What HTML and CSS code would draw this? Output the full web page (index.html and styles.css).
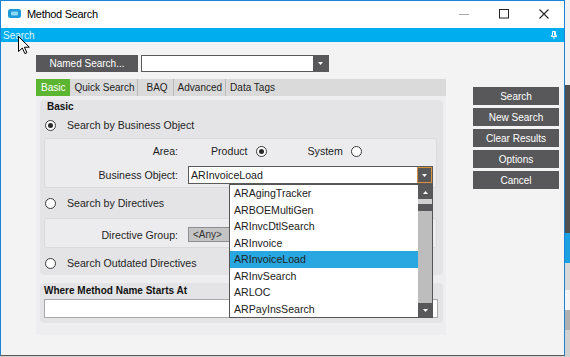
FILE: index.html
```html
<!DOCTYPE html>
<html>
<head>
<meta charset="utf-8">
<link rel="stylesheet" href="styles.css">
</head>
<body>
<div class="window">
  <div class="titlebar">
    <svg class="app-icon" width="13" height="9" viewBox="0 0 13 9"><rect x="0" y="0" width="13" height="9" rx="2.5" fill="#1c9ad9"/><rect x="3" y="2.5" width="7" height="4" rx="1" fill="#8fd6f6"/></svg>
    <span class="title">Method Search</span>
    <div class="controls">
      <div class="ctl"><svg width="10" height="10" viewBox="0 0 10 10"><line x1="0" y1="5.5" x2="10" y2="5.5" stroke="#a8a8a8"/></svg></div>
      <div class="ctl"><svg width="10" height="10" viewBox="0 0 10 10"><rect x="0.5" y="0.5" width="9" height="8.5" fill="none" stroke="#222"/></svg></div>
      <div class="ctl"><svg width="10" height="10" viewBox="0 0 10 10"><path d="M0.5 0.5 L9.5 9.5 M9.5 0.5 L0.5 9.5" stroke="#222" stroke-width="1.1"/></svg></div>
    </div>
  </div>
  <div class="panelbar">
    <span>Search</span>
    <svg width="6" height="8" viewBox="0 0 6 8"><path d="M1.5 0.5 H4.5 V4.5 H5.5 V5.5 H0.5 V4.5 H1.5 Z" fill="none" stroke="#fff"/><line x1="3" y1="5.5" x2="3" y2="8" stroke="#fff"/><line x1="3.5" y1="1" x2="3.5" y2="4.5" stroke="#fff"/></svg>
  </div>
  <div class="content">
    <div class="main">
      <div class="named-row">
        <div class="btn named">Named Search...</div>
        <div class="combo named-combo">
          <div class="txt"></div>
          <div class="drop"><svg width="5" height="3" viewBox="0 0 5 3"><path d="M0 0 H5 L2.5 3 Z" fill="#fff"/></svg></div>
        </div>
      </div>
      <div class="tabs">
        <div class="tab active">Basic</div>
        <div class="tab sep">Quick Search</div>
        <div class="tab sep baq">BAQ</div>
        <div class="tab sep">Advanced</div>
        <div class="tab">Data Tags</div>
      </div>
      <div class="tabpage">
        <div class="group basic">
          <div class="group-title">Basic</div>
          <div class="radio-row r1"><span class="radio checked"></span><span>Search by Business Object</span></div>
          <div class="subbox box1">
            <div class="field-row area-row">
              <span class="lbl">Area:</span>
              <div class="area-opts">
                <span>Product</span><span class="radio checked opt-radio"></span>
                <span class="sys">System</span><span class="radio opt-radio"></span>
              </div>
            </div>
            <div class="field-row bo-row">
              <span class="lbl">Business Object:</span>
              <div class="combo-wrap">
                <div class="combo bo-combo">
                  <div class="txt">ARInvoiceLoad</div>
                  <div class="drop focus"><svg width="5" height="3" viewBox="0 0 5 3"><path d="M0 0 H5 L2.5 3 Z" fill="#fff"/></svg></div>
                </div>
                <div class="droplist">
                  <div class="items">
                    <div class="item">ARAgingTracker</div>
                    <div class="item">ARBOEMultiGen</div>
                    <div class="item">ARInvcDtlSearch</div>
                    <div class="item">ARInvoice</div>
                    <div class="item sel">ARInvoiceLoad</div>
                    <div class="item">ARInvSearch</div>
                    <div class="item">ARLOC</div>
                    <div class="item">ARPayInsSearch</div>
                  </div>
                  <div class="scroll">
                    <div class="sb-btn"><svg width="5" height="3" viewBox="0 0 5 3"><path d="M0 3 H5 L2.5 0 Z" fill="#fff"/></svg></div>
                    <div class="sb-gap"></div>
                    <div class="sb-dark"></div>
                    <div class="sb-track"></div>
                    <div class="sb-btn"><svg width="5" height="3" viewBox="0 0 5 3"><path d="M0 0 H5 L2.5 3 Z" fill="#fff"/></svg></div>
                  </div>
                </div>
              </div>
            </div>
          </div>
          <div class="radio-row r2"><span class="radio"></span><span>Search by Directives</span></div>
          <div class="subbox box2">
            <div class="field-row dg-row">
              <span class="lbl">Directive Group:</span>
              <div class="dg-combo">&lt;Any&gt;</div>
            </div>
          </div>
          <div class="radio-row r3"><span class="radio"></span><span>Search Outdated Directives</span></div>
        </div>
        <div class="group where">
          <div class="group-title where-title">Where Method Name Starts At</div>
          <div class="textbox"></div>
        </div>
      </div>
    </div>
    <div class="side">
      <div class="btn">Search</div>
      <div class="btn">New Search</div>
      <div class="btn">Clear Results</div>
      <div class="btn">Options</div>
      <div class="btn">Cancel</div>
    </div>
  </div>
</div>
<div class="backdrop">
  <div class="bd bd1"></div>
  <div class="bd bd2"></div>
  <div class="bd bd3"></div>
  <div class="bd bd4"></div>
  <div class="bd bd5"></div>
  <div class="bd bd6"></div>
  <div class="bd bd7"></div>
</div>
<svg class="cursor" width="12" height="19" viewBox="0 0 12 19"><path d="M0.5 0.5 V15.5 L4.3 12 L6.9 17.6 L8.9 16.7 L6.4 11.2 H11.3 Z" fill="#fff" stroke="#000"/></svg>
</body>
</html>
```

FILE: styles.css
```css
body {
  margin: 0;
  width: 570px;
  height: 357px;
  overflow: hidden;
  display: flex;
  background: #cfcfcf;
  position: relative;
  font-family: "Liberation Sans", Arial, sans-serif;
  color: #1e1e1e;
}

.window {
  width: 565px;
  height: 356px;
  flex: none;
  box-sizing: border-box;
  border: 1px solid #1883d7;
  border-bottom-color: #5b5b5b;
  background: #f3f3f4;
  display: flex;
  flex-direction: column;
  font-size: 10.6px;
}

.titlebar {
  height: 27px;
  flex: none;
  box-sizing: border-box;
  padding-bottom: 2px;
  background: #fff;
  display: flex;
  align-items: center;
}

.app-icon {
  margin-left: 7px;
  flex: none;
}

.title {
  margin-left: 6px;
  font-size: 11px;
  letter-spacing: -0.3px;
  color: #000;
}

.controls {
  margin-left: auto;
  display: flex;
  align-self: stretch;
}

.ctl {
  width: 40px;
  display: flex;
  align-items: center;
  justify-content: center;
}

.panelbar {
  height: 14px;
  flex: none;
  background: #00adef;
  color: #e3f5fd;
  font-size: 10px;
  display: flex;
  align-items: center;
  justify-content: space-between;
  padding: 0 7px 0 2px;
}

.content {
  display: flex;
  padding: 13px 5px 0 35px;
  flex: 1;
}

.main {
  width: 410px;
  flex: none;
  display: flex;
  flex-direction: column;
}

.side {
  width: 86px;
  margin-left: 27px;
  margin-top: 32px;
  display: flex;
  flex-direction: column;
  gap: 3px;
}

.btn {
  background: #58585a;
  color: #fff;
  font-size: 10px;
  height: 18px;
  display: flex;
  align-items: center;
  justify-content: center;
}

.named-row {
  display: flex;
  gap: 3px;
  height: 17px;
}

.named {
  width: 102px;
  height: 17px;
}

.combo {
  background: #fff;
  border: 1px solid #5a5a5a;
  box-sizing: border-box;
  display: flex;
}

.named-combo {
  width: 188px;
  height: 17px;
}

.combo .txt {
  flex: 1;
  padding-left: 2px;
  line-height: 16px;
  color: #1a1a1a;
}

.drop {
  width: 15px;
  background: #58585a;
  display: flex;
  align-items: center;
  justify-content: center;
}

.drop.focus {
  box-shadow: inset 0 0 0 1px #d8903c;
}

.tabs {
  margin-top: 7px;
  height: 17px;
  background: #dadada;
  display: flex;
  font-size: 10px;
}

.tab {
  padding: 0 3px 0 4px;
  line-height: 17px;
  color: #222;
}

.tab.active {
  background: #5cb531;
  color: #fff;
  padding: 0 5px;
}

.tab.sep {
  border-right: 1px solid #b9b9b9;
}

.tab.baq {
  padding: 0 5px 0 8px;
}

.tabpage {
  height: 239px;
  box-sizing: border-box;
  background: #eeeef0;
  padding: 4px 3px 0 4px;
  display: flex;
  flex-direction: column;
}

.group {
  background: #e4e4e6;
  border-radius: 4px;
  box-sizing: border-box;
  display: flex;
  flex-direction: column;
}

.basic {
  height: 175px;
  padding: 0 6px 0 4px;
}

.group-title {
  font-weight: bold;
  font-size: 10px;
  line-height: 13px;
  height: 13px;
  padding-left: 3px;
  color: #111;
}

.radio-row {
  display: flex;
  align-items: center;
  height: 12px;
  gap: 11px;
  padding-left: 1px;
}

.r1 { margin-top: 6px; }
.r2 { margin-top: 9px; }
.r3 { margin-top: 9px; }

.radio {
  width: 11px;
  height: 11px;
  flex: none;
  box-sizing: border-box;
  border: 1px solid #3a3a3a;
  border-radius: 50%;
  background: #fff;
  display: flex;
  align-items: center;
  justify-content: center;
}

.radio.checked::after {
  content: "";
  width: 5px;
  height: 5px;
  border-radius: 50%;
  background: #2a2a2a;
}

.subbox {
  background: #ececee;
  border: 1px solid #dadadc;
  border-radius: 3px;
  box-sizing: border-box;
}

.box1 {
  margin-top: 7px;
  height: 50px;
  padding-top: 6px;
}

.box2 {
  margin-top: 9px;
  height: 30px;
  padding-top: 8px;
}

.field-row {
  display: flex;
  align-items: center;
}

.area-row { height: 12px; }

.lbl {
  width: 133px;
  flex: none;
  text-align: right;
}

.area-opts {
  margin-left: 33px;
  display: flex;
  align-items: center;
}

.opt-radio { margin-left: 8px; }

.sys { margin-left: 41px; }

.bo-row {
  margin-top: 9px;
  height: 18px;
}

.combo-wrap {
  margin-left: 10px;
  width: 245px;
  height: 18px;
  position: relative;
}

.bo-combo {
  width: 245px;
  height: 18px;
}

.bo-combo .txt { line-height: 16px; }

.droplist {
  position: absolute;
  top: 18px;
  right: 0;
  width: 204px;
  height: 134px;
  box-sizing: border-box;
  border: 1px solid #555;
  background: #fff;
  display: flex;
  z-index: 2;
}

.items {
  flex: 1;
  display: flex;
  flex-direction: column;
}

.item {
  height: 16.5px;
  line-height: 16.5px;
  padding-left: 4px;
  color: #222;
}

.item.sel {
  background: #29a7e1;
}

.scroll {
  width: 14px;
  display: flex;
  flex-direction: column;
  background: #bdbdbd;
}

.sb-btn {
  height: 14px;
  background: #58585a;
  display: flex;
  align-items: center;
  justify-content: center;
}

.sb-gap {
  height: 5px;
  background: #d0d0d0;
}

.sb-dark {
  height: 7px;
  background: #58585a;
}

.sb-track { flex: 1; }

.dg-row { height: 15px; }

.dg-combo {
  margin-left: 10px;
  width: 245px;
  height: 15px;
  box-sizing: border-box;
  background: #c4c4c4;
  border: 1px solid #8e8e8e;
  font-size: 10px;
  line-height: 13px;
  padding-left: 4px;
  color: #333;
}

.where {
  margin-top: 8px;
  height: 40px;
  padding: 1px 5px 0 4px;
}

.where-title { padding-left: 0; }

.textbox {
  margin-top: 2px;
  height: 19px;
  box-sizing: border-box;
  background: #fff;
  border: 1px solid #a8a8a8;
}

.backdrop {
  width: 5px;
  flex: none;
  display: flex;
  flex-direction: column;
}

.bd1 { height: 85px; background: #f2f2f2; }
.bd2 { height: 148px; background: #505050; }
.bd3 { height: 30px; background: #1ba1e2; }
.bd4 { height: 27px; background: #d8d8d8; }
.bd5 { height: 20px; background: #f4f4f4; }
.bd6 { height: 20px; background: #b0b0b0; }
.bd7 { flex: 1; background: #d0d0d0; }

.cursor {
  position: absolute;
  left: 18px;
  top: 36px;
}
```
